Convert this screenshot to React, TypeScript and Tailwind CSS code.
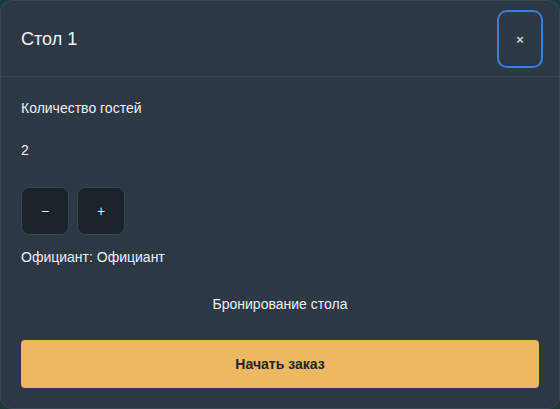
export default function App() {
  return (
    <div className="w-[560px] h-[409px] bg-[#1d3a37] font-['Liberation_Sans',Arial,sans-serif]">
      <div className="w-full h-full rounded-[12px] border border-[#3e4855] bg-[#2e3744] flex flex-col overflow-hidden">
        <div className="h-[76px] shrink-0 flex items-center justify-between pl-[20px] pr-[16px] border-b border-[#3e4855]">
          <h2 className="text-[18px] text-[#f1f3f5] leading-none">Стол 1</h2>
          <button className="w-[46px] h-[58px] mt-[1px] rounded-[10px] border-2 border-[#3f7ed8] flex items-center justify-center text-[#c9ced4] text-[13px] font-bold leading-none">
            ×
          </button>
        </div>
        <div className="flex flex-col px-[20px] pt-[21px] text-[14px] text-[#eef1f4]">
          <div className="h-[20px] leading-[20px]">Количество гостей</div>
          <div className="h-[20px] leading-[20px] mt-[22px]">2</div>
          <div className="flex gap-[8px] mt-[27px]">
            <button className="w-[48px] h-[48px] rounded-[8px] border border-[#3a4550] bg-[#1b2429] text-[#e8ebee] text-[14px] flex items-center justify-center">
              −
            </button>
            <button className="w-[48px] h-[48px] rounded-[8px] border border-[#3a4550] bg-[#1b2429] text-[#e8ebee] text-[14px] flex items-center justify-center">
              +
            </button>
          </div>
          <div className="h-[20px] leading-[20px] mt-[12px]">Официант: Официант</div>
          <div className="h-[20px] leading-[20px] mt-[27px] text-center">Бронирование стола</div>
          <button className="mt-[26px] h-[48px] w-full rounded-[4px] bg-[#ecb962] text-[#1f2328] text-[14px] font-bold">
            Начать заказ
          </button>
        </div>
      </div>
    </div>
  );
}
